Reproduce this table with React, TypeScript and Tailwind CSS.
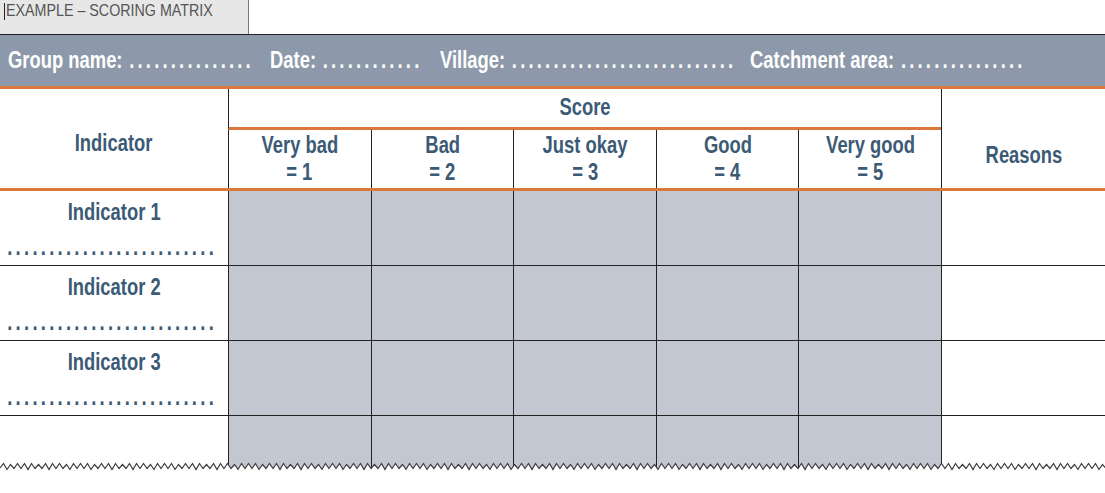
const font = "font-['Liberation_Sans',Arial,sans-serif]";

const scores = [
  ["Very bad", "= 1"],
  ["Bad", "= 2"],
  ["Just okay", "= 3"],
  ["Good", "= 4"],
  ["Very good", "= 5"],
];

// the print uses a condensed face; squeeze the regular one
function Narrow({ children, left }: { children: React.ReactNode; left?: boolean }) {
  return (
    <span className={`inline-block whitespace-nowrap scale-x-[0.8] ${left ? "origin-left" : "origin-center"}`}>
      {children}
    </span>
  );
}

function Field({ label, dots, w }: { label: string; dots: number; w: string }) {
  return (
    <div className={`${w} shrink-0`}>
      <Narrow left>
        {label} <span className="ml-[2px] tracking-[4px]">{".".repeat(dots)}</span>
      </Narrow>
    </div>
  );
}

function BodyRow({ label, last }: { label?: string; last?: boolean }) {
  return (
    <div className={`grid grid-cols-[228px_repeat(5,1fr)_164px] ${last ? "h-[53px]" : "h-[75px] border-b border-[#222]"}`}>
      <div className="flex flex-col items-center pt-[8px] text-[23px] font-bold text-[#3b5a75]">
        {label && (
          <>
            <div className="leading-[26px]">
              <Narrow>{label}</Narrow>
            </div>
            <div className="mt-[12px] pr-[4px] leading-[20px]">
              <Narrow>
                <span className="tracking-[4.1px]">{".".repeat(25)}</span>
              </Narrow>
            </div>
          </>
        )}
      </div>
      {scores.map((s) => (
        <div key={s[0]} className="border-l border-[#222] bg-[#c3c7d2]" />
      ))}
      <div className="border-l border-[#222]" />
    </div>
  );
}

const zig = Array.from(
  { length: 160 },
  (_, i) => `L${i * 7 + 3.5} ${i % 4 === 1 ? 2.5 : 1.5} L${i * 7 + 7} ${i % 3 === 0 ? 7.5 : 6.5}`
).join(" ");

export default function App() {
  return (
    <div className={`relative h-[493px] w-[1105px] overflow-hidden bg-white ${font}`}>
      {/* tab */}
      <div className="relative flex h-[34px] w-[249px] items-start border-r border-[#777] bg-[#e7e7e7] pl-[6px]">
        <div className="absolute left-[4px] top-[3px] h-[17px] w-px bg-[#222]" />
        <span className="inline-block origin-left scale-x-[0.84] whitespace-nowrap text-[17px] leading-[21px] text-[#555]">
          EXAMPLE – SCORING MATRIX
        </span>
      </div>

      {/* group info bar */}
      <div className="flex h-[52px] items-center border-t border-[#222] bg-[#8d99aa] pl-[8px] text-[23px] font-bold text-white">
        <Field label="Group name:" dots={15} w="w-[262px]" />
        <Field label="Date:" dots={12} w="w-[170px]" />
        <Field label="Village:" dots={27} w="w-[310px]" />
        <Field label="Catchment area:" dots={15} w="w-[300px]" />
      </div>
      <div className="h-[3px] bg-[#d9783a]" />

      {/* table header */}
      <div className="grid grid-cols-[228px_repeat(5,1fr)_164px] grid-rows-[41px_58px] text-[23px] font-bold text-[#3b5a75]">
        <div className="row-span-2 flex items-center justify-center pt-[10px]">
          <Narrow>Indicator</Narrow>
        </div>
        <div className="col-span-5 flex items-center justify-center border-b-[3px] border-l border-b-[#d9783a] border-l-[#222] pb-[2px]">
          <Narrow>Score</Narrow>
        </div>
        <div className="col-start-7 row-span-2 row-start-1 flex items-center justify-center border-l border-[#222] pt-[33px]">
          <Narrow>Reasons</Narrow>
        </div>
        {scores.map((s) => (
          <div key={s[0]} className="flex flex-col items-center border-l border-[#222] pt-[2px] leading-[27px]">
            <Narrow>{s[0]}</Narrow>
            <Narrow>{s[1]}</Narrow>
          </div>
        ))}
      </div>
      <div className="h-[3px] bg-[#d9783a]" />

      <BodyRow label="Indicator 1" />
      <BodyRow label="Indicator 2" />
      <BodyRow label="Indicator 3" />
      <BodyRow last />

      {/* torn edge */}
      <svg className="absolute left-0 top-[462px]" width="1105" height="31" viewBox="0 0 1105 31">
        <path d={`M0 6 ${zig} L1120 31 L0 31 Z`} fill="white" />
        <path d={`M0 6 ${zig}`} fill="none" stroke="#3a3a3a" strokeWidth="1.2" />
      </svg>
    </div>
  );
}
